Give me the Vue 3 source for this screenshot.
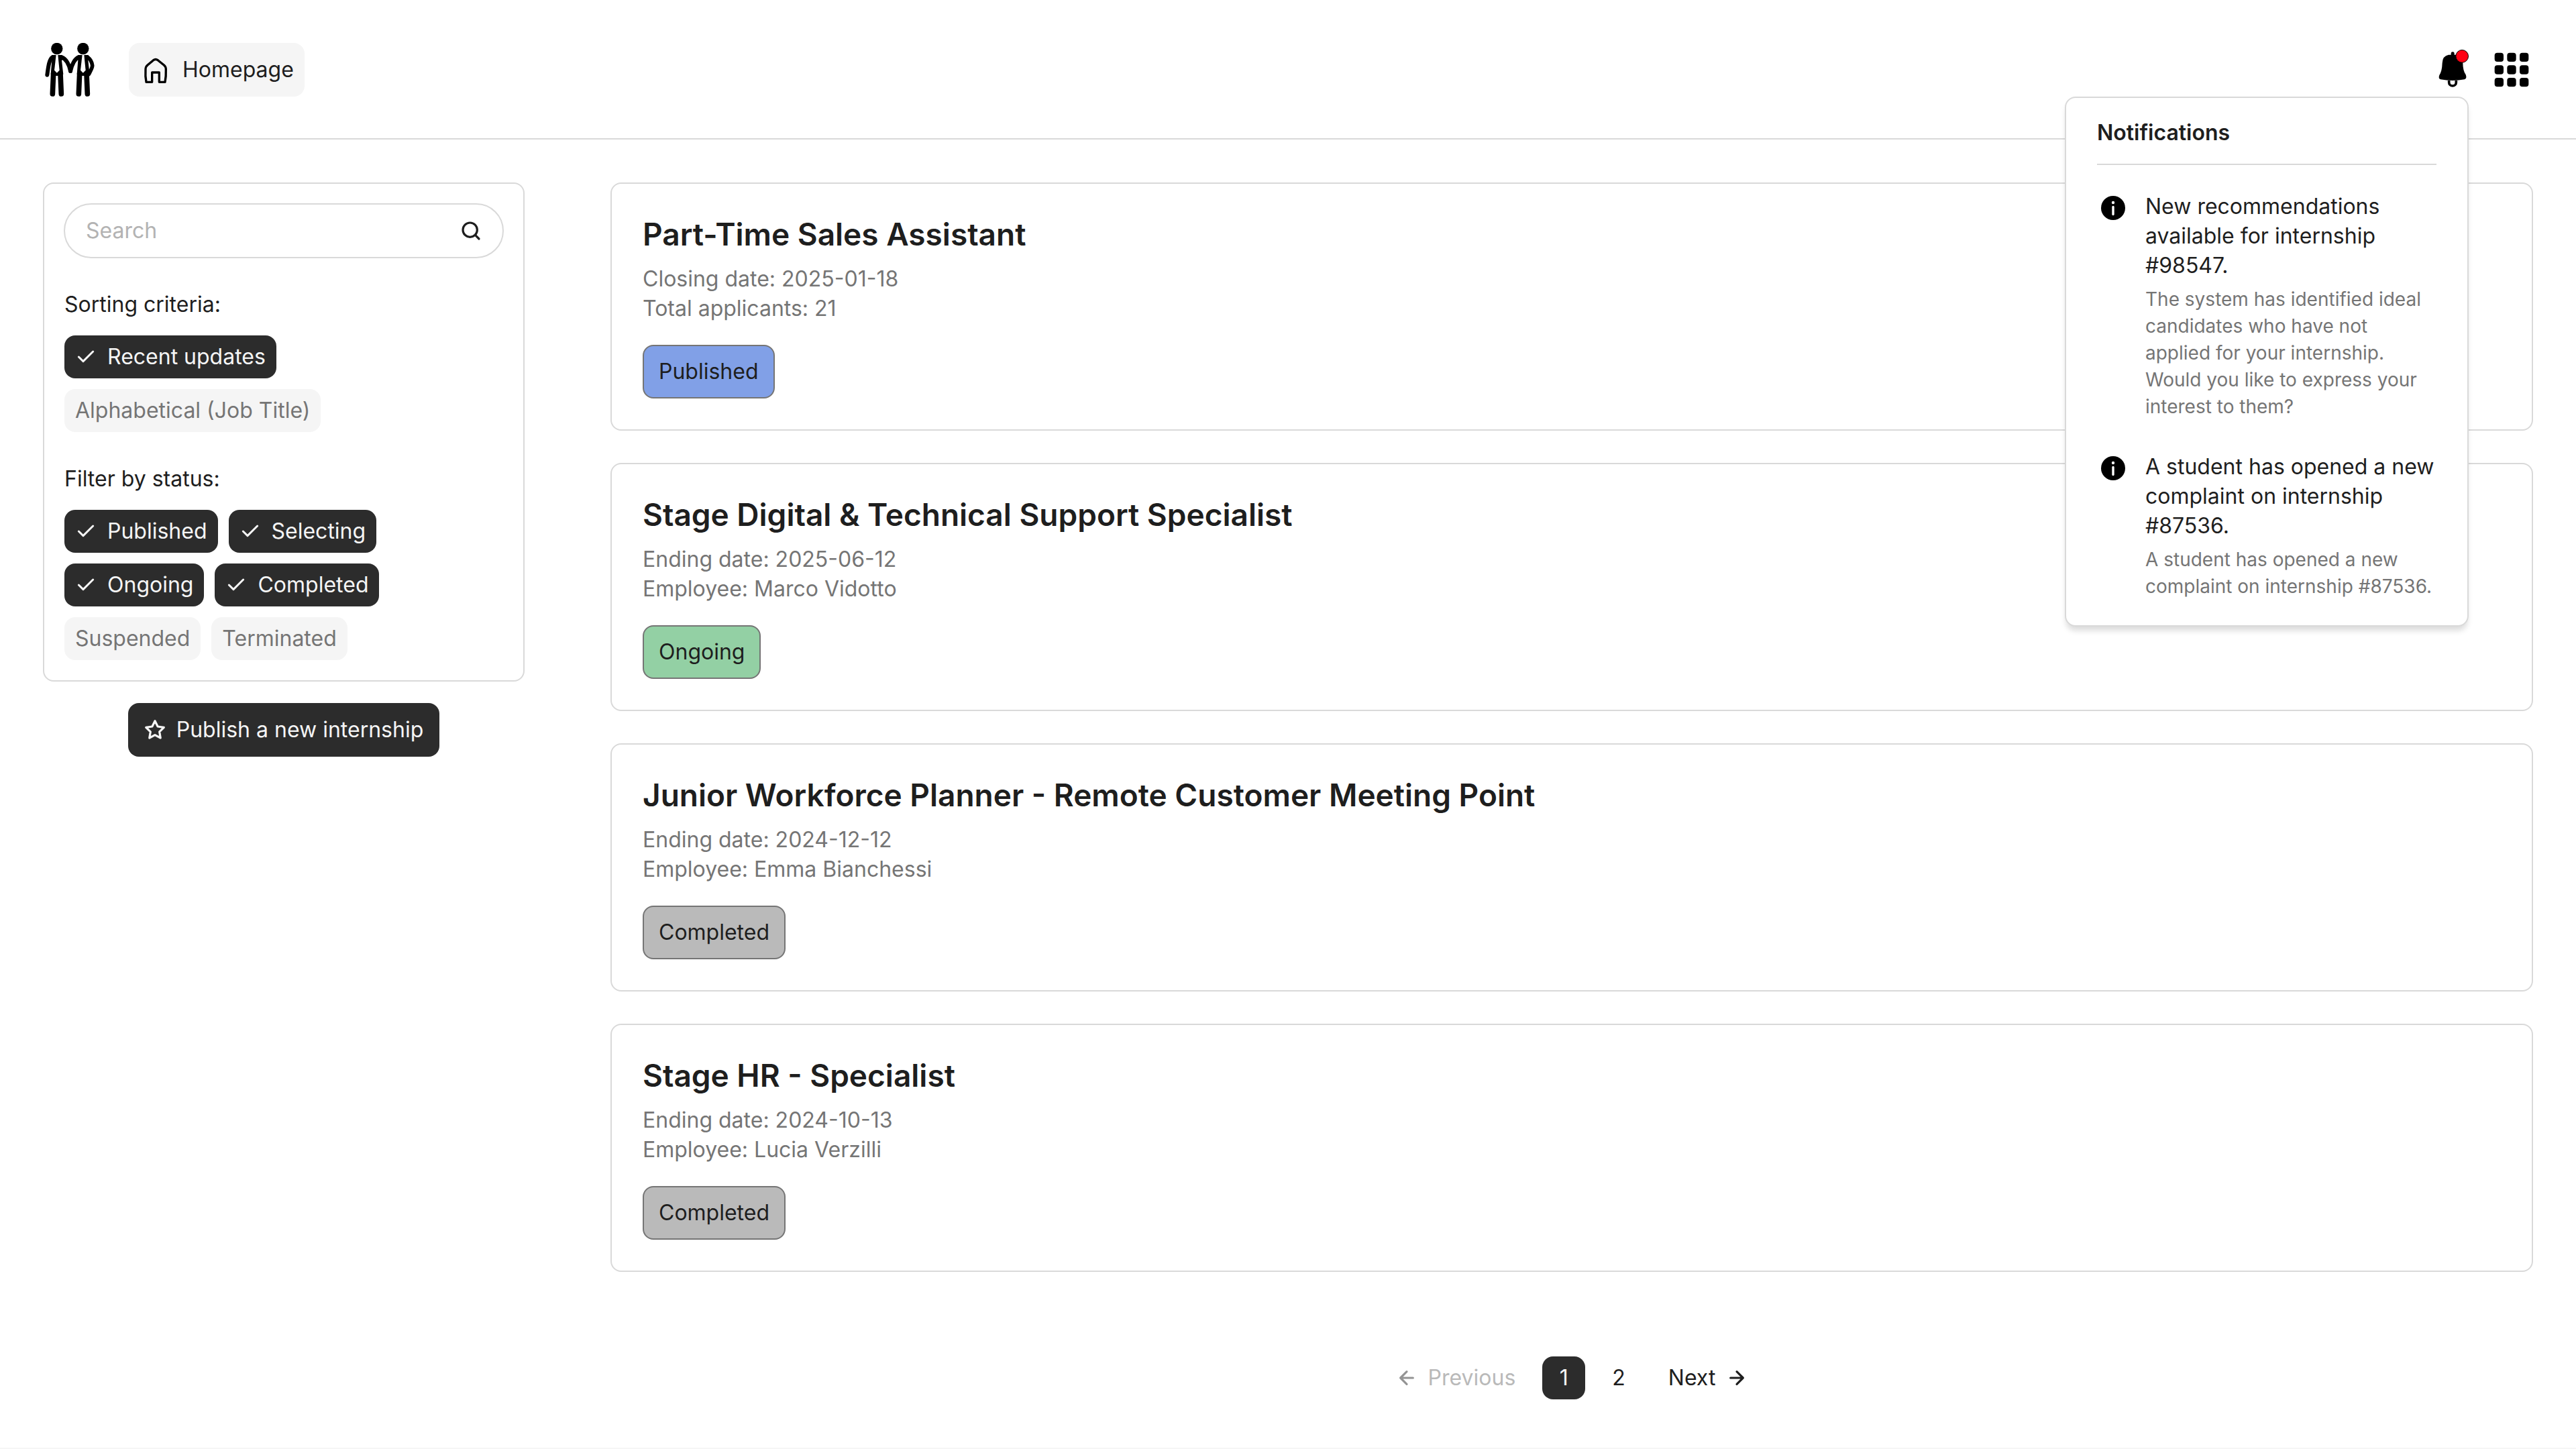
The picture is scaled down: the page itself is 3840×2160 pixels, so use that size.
<script setup>
import { ref } from 'vue'

const sortOptions = ref([
  { label: 'Recent updates', active: true },
  { label: 'Alphabetical (Job Title)', active: false },
])

const statusFilters = ref([
  { label: 'Published', active: true },
  { label: 'Selecting', active: true },
  { label: 'Ongoing', active: true },
  { label: 'Completed', active: true },
  { label: 'Suspended', active: false },
  { label: 'Terminated', active: false },
])

const internships = [
  {
    title: 'Part-Time Sales Assistant',
    details: ['Closing date: 2025-01-18', 'Total applicants: 21'],
    status: 'Published',
  },
  {
    title: 'Stage Digital & Technical Support Specialist',
    details: ['Ending date: 2025-06-12', 'Employee: Marco Vidotto'],
    status: 'Ongoing',
  },
  {
    title: 'Junior Workforce Planner - Remote Customer Meeting Point',
    details: ['Ending date: 2024-12-12', 'Employee: Emma Bianchessi'],
    status: 'Completed',
  },
  {
    title: 'Stage HR - Specialist',
    details: ['Ending date: 2024-10-13', 'Employee: Lucia Verzilli'],
    status: 'Completed',
  },
]

const notifications = [
  {
    title: 'New recommendations available for internship #98547.',
    body: 'The system has identified ideal candidates who have not applied for your internship. Would you like to express your interest to them?',
  },
  {
    title: 'A student has opened a new complaint on internship #87536.',
    body: 'A student has opened a new complaint on internship #87536.',
  },
]

const gridCells = [0, 1, 2, 3, 4, 5, 6, 7, 8]

function selectSort(option) {
  sortOptions.value.forEach((o) => {
    o.active = o === option
  })
}
</script>

<template>
  <div class="page">
    <header class="header">
      <div class="header-left">
        <svg class="logo" viewBox="82 72 220 240" role="img" aria-label="Two people shaking hands">
          <circle cx="134.5" cy="97.5" r="26" />
          <circle cx="251.5" cy="97.5" r="26" />
          <g fill="none" stroke="#000" stroke-linecap="round" stroke-linejoin="round">
            <path d="M114 136C99 148 96 178 91 215" stroke-width="18" />
            <path d="M156 136C176 144 188 165 195 198" stroke-width="18" />
            <path d="M231 136C213 144 203 165 195 198" stroke-width="18" />
            <path d="M272 136C284 145 291 158 293 173C293 184 285 196 277 212" stroke-width="17" />
            <path d="M119 208L115 300M150 208L154 300M236 208L232 300M267 208L271 300" stroke-width="23" />
          </g>
          <path d="M112 126H158L160 148L156 150L163 212L140 219H129L107 212L112 150L109 140Z" />
          <path d="M229 126H275L277 148L274 150L281 212L257 219H246L224 212L229 150L226 140Z" />
          <path d="M131 125H139L146 194L134.5 206L123 194Z" fill="#fff" />
          <path d="M248 125H256L263 194L251.5 206L240 194Z" fill="#fff" />
        </svg>
        <a class="home-link" href="#">
          <svg class="icon-lg" viewBox="504 120 144 144" aria-hidden="true">
            <path
              d="M566 149L539 172Q531 179 531 190Q529 222 534 247H560V204H592V247H618Q623 222 622 190Q622 179 614 172L586 149Q576 142 566 149Z"
              fill="none" stroke="#000" stroke-width="10" stroke-linejoin="round"
            />
          </svg>
          <span>Homepage</span>
        </a>
      </div>

      <div class="header-right">
        <div class="bell-wrap">
          <button class="icon-button" type="button" aria-label="Notifications" aria-expanded="true">
            <svg viewBox="192 96 192 192" aria-hidden="true">
              <rect x="281" y="112" width="15" height="24" rx="7" />
              <path d="M270 125H306Q333 130 334 162Q334 196 347 214Q353 231 342 235Q288 245 234 235Q223 231 229 216Q241 198 242 162Q243 130 270 125Z" />
              <path d="M272 240V248A16 16 0 0 0 304 248V240" fill="none" stroke="#000" stroke-width="11" />
              <circle cx="330.5" cy="131.5" r="28" fill="#ff0013" stroke="#000" stroke-width="3" />
            </svg>
          </button>

          <section class="popover" aria-label="Notifications panel">
            <h2 class="popover-title">Notifications</h2>
            <ul class="notice-list">
              <li v-for="n in notifications" :key="n.title" class="notice">
                <svg class="icon-lg" viewBox="0 0 48 48" aria-hidden="true">
                  <circle cx="24" cy="24" r="18" />
                  <circle cx="24" cy="16" r="2.2" fill="#fff" />
                  <path d="M24 22.5V33.5" stroke="#fff" stroke-width="3.4" stroke-linecap="round" />
                </svg>
                <div class="notice-text">
                  <p class="notice-title">{{ n.title }}</p>
                  <p class="notice-body">{{ n.body }}</p>
                </div>
              </li>
            </ul>
          </section>
        </div>

        <button class="icon-button" type="button" aria-label="Apps">
          <svg viewBox="456 96 192 192" aria-hidden="true">
            <rect
              v-for="i in gridCells" :key="i"
              :x="476 + (i % 3) * 56" :y="116 + Math.floor(i / 3) * 56"
              width="40" height="40" rx="12"
            />
          </svg>
        </button>
      </div>
    </header>

    <main class="main">
      <aside class="sidebar">
        <div class="filters">
          <label class="search">
            <input type="search" placeholder="Search" aria-label="Search" />
            <svg class="icon-sm" viewBox="0 0 16 16" aria-hidden="true">
              <path
                d="M14 14L11.1 11.1M12.67 7.33A5.33 5.33 0 1 1 2 7.33A5.33 5.33 0 0 1 12.67 7.33Z"
                fill="none" stroke="currentColor" stroke-width="1.6" stroke-linecap="round"
              />
            </svg>
          </label>

          <section class="group">
            <h3 class="group-title">Sorting criteria:</h3>
            <div class="chips">
              <button
                v-for="o in sortOptions" :key="o.label" type="button"
                class="chip" :class="{ active: o.active }" :aria-pressed="o.active"
                @click="selectSort(o)"
              >
                <svg v-if="o.active" class="icon-sm" viewBox="0 0 16 16" aria-hidden="true">
                  <path d="M13.33 4L6 11.33L2.67 8" fill="none" stroke="currentColor" stroke-width="1.5" stroke-linecap="round" stroke-linejoin="round" />
                </svg>
                <span>{{ o.label }}</span>
              </button>
            </div>
          </section>

          <section class="group">
            <h3 class="group-title">Filter by status:</h3>
            <div class="chips">
              <button
                v-for="f in statusFilters" :key="f.label" type="button"
                class="chip" :class="{ active: f.active }" :aria-pressed="f.active"
                @click="f.active = !f.active"
              >
                <svg v-if="f.active" class="icon-sm" viewBox="0 0 16 16" aria-hidden="true">
                  <path d="M13.33 4L6 11.33L2.67 8" fill="none" stroke="currentColor" stroke-width="1.5" stroke-linecap="round" stroke-linejoin="round" />
                </svg>
                <span>{{ f.label }}</span>
              </button>
            </div>
          </section>
        </div>

        <button class="publish" type="button">
          <svg class="icon-sm" viewBox="0 0 24 24" aria-hidden="true">
            <path
              d="M12 2L15.09 8.26L22 9.27L17 14.14L18.18 21.02L12 17.77L5.82 21.02L7 14.14L2 9.27L8.91 8.26Z"
              fill="none" stroke="currentColor" stroke-width="2.4" stroke-linejoin="round"
            />
          </svg>
          <span>Publish a new internship</span>
        </button>
      </aside>

      <section class="content">
        <div class="cards">
          <article v-for="job in internships" :key="job.title" class="card">
            <h2 class="card-title">{{ job.title }}</h2>
            <div class="card-details">
              <p v-for="line in job.details" :key="line">{{ line }}</p>
            </div>
            <span class="badge" :class="job.status.toLowerCase()">{{ job.status }}</span>
          </article>
        </div>

        <nav class="pagination" aria-label="Pagination">
          <button class="step" type="button" disabled>
            <svg class="icon-sm" viewBox="0 0 16 16" aria-hidden="true">
              <path d="M12.67 8H3.33M8 12.67L3.33 8L8 3.33" fill="none" stroke="#2c2c2c" stroke-width="1.6" stroke-linecap="round" stroke-linejoin="round" />
            </svg>
            <span>Previous</span>
          </button>
          <div class="pages">
            <a class="page-link current" href="#" aria-current="page">1</a>
            <a class="page-link" href="#">2</a>
          </div>
          <button class="step" type="button">
            <span>Next</span>
            <svg class="icon-sm" viewBox="0 0 16 16" aria-hidden="true">
              <path d="M3.33 8H12.67M8 3.33L12.67 8L8 12.67" fill="none" stroke="currentColor" stroke-width="1.6" stroke-linecap="round" stroke-linejoin="round" />
            </svg>
          </button>
        </nav>
      </section>
    </main>
  </div>
</template>

<style>
body {
  margin: 0;
  background: #fff;
}
</style>

<style scoped>
.page {
  box-sizing: border-box;
  min-height: 100vh;
  display: flex;
  flex-direction: column;
  border-bottom: 2px solid #f5f5f5;
  background: #fff;
  color: #1e1e1e;
  font-family: Inter, "Liberation Sans", sans-serif;
  font-size: 32px;
  line-height: 44px;
}

.page *,
.page *::before,
.page *::after {
  box-sizing: border-box;
}

h2,
h3,
p,
ul {
  margin: 0;
  padding: 0;
}

button,
input {
  margin: 0;
  border: 0;
  background: none;
  color: inherit;
  font: inherit;
}

button {
  cursor: pointer;
}

svg {
  display: block;
  flex: none;
}

.icon-sm {
  width: 32px;
  height: 32px;
}

.icon-lg {
  width: 48px;
  height: 48px;
}

/* Header */
.header {
  display: flex;
  align-items: center;
  justify-content: space-between;
  padding: 64px 64px 62px;
  border-bottom: 2px solid #d9d9d9;
}

.header-left {
  display: flex;
  align-items: center;
  gap: 48px;
}

.logo {
  width: 80px;
  height: 80px;
}

.home-link {
  display: flex;
  align-items: center;
  gap: 16px;
  padding: 16px;
  border-radius: 16px;
  background: #f5f5f5;
  color: inherit;
  text-decoration: none;
}

.header-right {
  display: flex;
  align-items: center;
  gap: 24px;
}

.icon-button {
  display: block;
  width: 64px;
  height: 64px;
  padding: 0;
}

.bell-wrap {
  position: relative;
}

/* Notification panel */
.popover {
  position: absolute;
  z-index: 10;
  top: 72px;
  right: 8px;
  width: 602px;
  padding: 30px 46px 38px;
  border: 2px solid #d9d9d9;
  border-radius: 16px;
  background: #fff;
  box-shadow: 0 8px 8px -2px rgba(12, 12, 13, 0.15);
}

.popover-title {
  padding-bottom: 24px;
  border-bottom: 2px solid #d9d9d9;
  font-size: 32px;
  font-weight: 600;
}

.notice-list {
  display: flex;
  flex-direction: column;
  gap: 48px;
  padding-top: 40px;
  list-style: none;
}

.notice {
  display: flex;
  align-items: flex-start;
  gap: 24px;
}

.notice-text {
  display: flex;
  flex: 1;
  flex-direction: column;
  gap: 8px;
}

.notice-body {
  color: #757575;
  font-size: 28px;
  line-height: 40px;
}

/* Body */
.main {
  display: grid;
  flex: 1;
  grid-template-columns: 718px 1fr;
  gap: 128px;
  padding: 64px 64px 72px;
}

.sidebar {
  display: flex;
  flex-direction: column;
  align-items: center;
  gap: 32px;
}

.filters {
  display: flex;
  flex-direction: column;
  gap: 48px;
  width: 100%;
  padding: 30px;
  border: 2px solid #d9d9d9;
  border-radius: 16px;
}

.search {
  display: flex;
  align-items: center;
  gap: 16px;
  height: 80px;
  padding: 0 32px;
  border-radius: 40px;
  outline: 2px solid #d9d9d9;
  outline-offset: -1px;
}

.search input {
  flex: 1;
  min-width: 0;
  padding: 0;
  outline: none;
  appearance: none;
}

.search input::placeholder {
  color: #b3b3b3;
  opacity: 1;
}

.group {
  display: flex;
  flex-direction: column;
  gap: 24px;
}

.group-title {
  font-size: 32px;
  font-weight: 400;
}

.chips {
  display: flex;
  flex-wrap: wrap;
  gap: 16px;
  padding-right: 80px;
}

.chip {
  display: flex;
  align-items: center;
  gap: 16px;
  padding: 16px;
  border-radius: 16px;
  background: #f5f5f5;
  color: #757575;
  line-height: 32px;
}

.chip.active {
  background: #2c2c2c;
  color: #f5f5f5;
}

.publish {
  display: flex;
  align-items: center;
  gap: 16px;
  padding: 24px;
  border-radius: 16px;
  background: #2c2c2c;
  color: #f5f5f5;
  line-height: 32px;
}

/* Cards */
.content {
  display: flex;
  flex-direction: column;
  justify-content: space-between;
  gap: 64px;
}

.cards {
  display: flex;
  flex-direction: column;
  gap: 48px;
}

.card {
  display: flex;
  flex-direction: column;
  align-items: flex-start;
  padding: 46px;
  border: 2px solid #d9d9d9;
  border-radius: 16px;
}

.card-title {
  font-size: 46px;
  font-weight: 600;
  line-height: 58px;
}

.card-details {
  margin: 16px 0 32px;
  color: #757575;
}

.badge {
  padding: 22px;
  border: 2px solid #757575;
  border-radius: 16px;
  line-height: 32px;
}

.badge.published {
  background: #81a0e7;
}

.badge.ongoing {
  background: #93d0a4;
}

.badge.completed {
  background: #bababa;
}

/* Pagination */
.pagination {
  display: flex;
  align-items: center;
  justify-content: center;
  gap: 24px;
}

.step {
  display: flex;
  align-items: center;
  gap: 16px;
  padding: 16px;
  line-height: 32px;
}

.step:disabled {
  color: #757575;
  cursor: default;
  opacity: 0.5;
}

.pages {
  display: flex;
  gap: 16px;
}

.page-link {
  min-width: 64px;
  padding: 16px 24px;
  border-radius: 16px;
  color: inherit;
  line-height: 32px;
  text-align: center;
  text-decoration: none;
}

.page-link.current {
  background: #2c2c2c;
  color: #f5f5f5;
}
</style>
